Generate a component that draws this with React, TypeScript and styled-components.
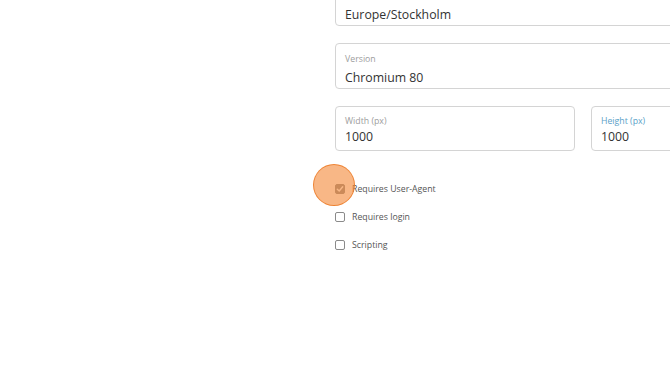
import React from 'react'
import styled, { createGlobalStyle } from 'styled-components'

const Global = createGlobalStyle`
  html, body {
    margin: 0;
    padding: 0;
    background: #fff;
    overflow: hidden;
  }
  body {
    font-family: "Open Sans", "Liberation Sans", sans-serif;
    width: 670px;
    height: 373px;
  }
`

type FieldProps = { label: string; value: string; focused?: boolean; compact?: boolean }

function Field({ label, value, focused, compact }: FieldProps): JSX.Element {
  return (
    <S.Field $compact={compact}>
      <S.Label $focused={focused}>{label}</S.Label>
      <S.Value $compact={compact}>{value}</S.Value>
    </S.Field>
  )
}

function Check({ label, checked, tapped }: { label: string; checked?: boolean; tapped?: boolean }): JSX.Element {
  return (
    <S.CheckRow>
      <S.Box $checked={checked}>
        {checked && (
          <svg width="8" height="8" viewBox="0 0 8 8">
            <path d="M1.3 4.2 L3.2 6 L6.7 1.8" fill="none" stroke="#fff" strokeWidth="1.4" strokeLinecap="round" strokeLinejoin="round" />
          </svg>
        )}
        {tapped && <S.Tap />}
      </S.Box>
      <S.CheckLabel>{label}</S.CheckLabel>
    </S.CheckRow>
  )
}

function App(): JSX.Element {
  return (
    <S.Page>
      <Global />
      <S.Form>
        <Field label="Timezone" value="Europe/Stockholm" />
        <Field label="Version" value="Chromium 80" />
        <S.Pair>
          <Field label="Width (px)" value="1000" compact />
          <Field label="Height (px)" value="1000" focused compact />
        </S.Pair>
        <S.Checks>
          <Check label="Requires User-Agent" checked tapped />
          <Check label="Requires login" />
          <Check label="Scripting" />
        </S.Checks>
      </S.Form>
    </S.Page>
  )
}

const S = {
  Page: styled.div`
    padding-left: 335px;
  `,
  Form: styled.div`
    width: 496px;
    margin-top: -20px;
    display: flex;
    flex-direction: column;
    gap: 17px;
  `,
  Pair: styled.div`
    display: grid;
    grid-template-columns: 240px 240px;
    gap: 16px;
  `,
  Field: styled.div<{ $compact?: boolean }>`
    box-sizing: border-box;
    height: ${p => (p.$compact ? '45px' : '46px')};
    border: 1px solid #d4d4d4;
    border-radius: 4px;
    padding: ${p => (p.$compact ? '8px' : '9px')} 9px 0;
    background: #fff;
  `,
  Label: styled.div<{ $focused?: boolean }>`
    font-size: 8.75px;
    line-height: 12px;
    color: ${p => (p.$focused ? '#5a9fc8' : '#9d9d9d')};
  `,
  Value: styled.div<{ $compact?: boolean }>`
    margin-top: ${p => (p.$compact ? '1px' : '4px')};
    font-size: 12.3px;
    line-height: 17px;
    color: #333;
  `,
  Checks: styled.div`
    margin-top: 7px;
    display: flex;
    flex-direction: column;
  `,
  CheckRow: styled.div`
    height: 28px;
    display: flex;
    align-items: center;
    gap: 7px;
  `,
  Box: styled.span<{ $checked?: boolean }>`
    position: relative;
    box-sizing: border-box;
    width: 10px;
    height: 10px;
    border: 1px solid #8a8a8a;
    border-radius: 2px;
    background: ${p => (p.$checked ? '#8a8a8a' : '#fff')};
    display: flex;
    align-items: center;
    justify-content: center;
  `,
  Tap: styled.span`
    position: absolute;
    left: -23px;
    top: -21px;
    width: 40px;
    height: 40px;
    border-radius: 50%;
    background: rgba(243, 139, 60, 0.62);
    border: 1.5px solid rgba(236, 122, 38, 0.85);
  `,
  CheckLabel: styled.span`
    font-size: 8.75px;
    color: #555;
  `,
}

export default App
